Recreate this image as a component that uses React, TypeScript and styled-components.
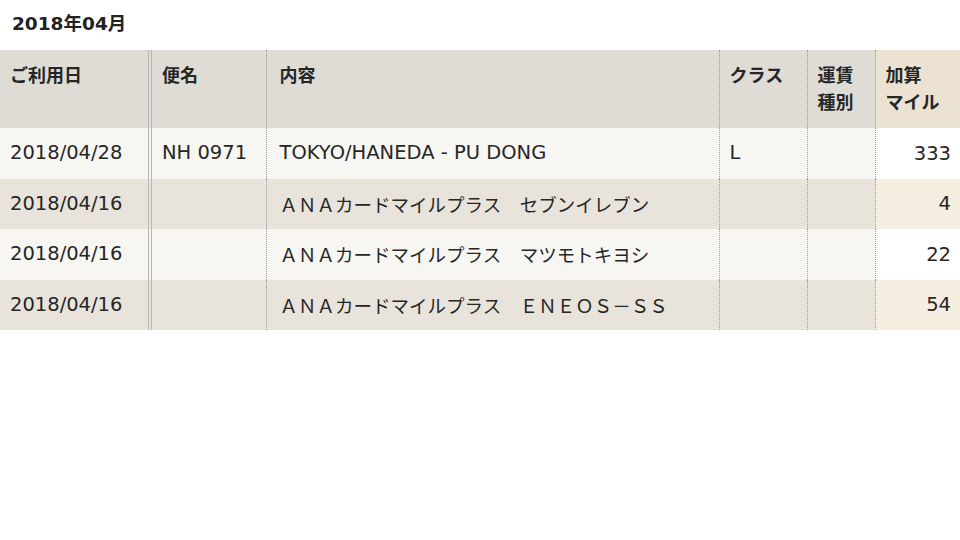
import styled, { createGlobalStyle } from "styled-components";

const GlobalStyle = createGlobalStyle`
  body {
    margin: 0;
    background: #fff;
    font-family: "DejaVu Sans", "Noto Sans CJK JP", sans-serif;
    color: #262626;
  }
`

type Row = {
  date: string
  flight: string
  content: string
  cls: string
  fare: string
  miles: string
}

const rows: Row[] = [
  { date: '2018/04/28', flight: 'NH 0971', content: 'TOKYO/HANEDA - PU DONG', cls: 'L', fare: '', miles: '333' },
  { date: '2018/04/16', flight: '', content: 'ＡＮＡカードマイルプラス　セブンイレブン', cls: '', fare: '', miles: '4' },
  { date: '2018/04/16', flight: '', content: 'ＡＮＡカードマイルプラス　マツモトキヨシ', cls: '', fare: '', miles: '22' },
  { date: '2018/04/16', flight: '', content: 'ＡＮＡカードマイルプラス　ＥＮＥＯＳ－ＳＳ', cls: '', fare: '', miles: '54' },
]

// full-width text reads a little smaller than the latin text in the shot
const isCjk = (s: string) => /[\u3000-\u30ff\uff00-\uffef]/.test(s)

function App() {
  return (
    <StyledPage>
      <GlobalStyle />
      <StyledMonth>2018<StyledCjk>年</StyledCjk>04<StyledCjk>月</StyledCjk></StyledMonth>
      <StyledTable>
        <colgroup>
          <col style={{ width: 150 }} />
          <col style={{ width: 116 }} />
          <col style={{ width: 453 }} />
          <col style={{ width: 88 }} />
          <col style={{ width: 68 }} />
          <col style={{ width: 85 }} />
        </colgroup>
        <thead>
          <tr>
            <StyledTh $border="double">ご利用日</StyledTh>
            <StyledTh $border="dotted">便名</StyledTh>
            <StyledTh $border="dotted" $wide>内容</StyledTh>
            <StyledTh $border="dotted">クラス</StyledTh>
            <StyledTh $border="dotted">運賃<br />種別</StyledTh>
            <StyledTh $accent>加算<br />マイル</StyledTh>
          </tr>
        </thead>
        <tbody>
          {rows.map((row, i) => (
            <StyledTr key={i} $even={i % 2 === 1}>
              <StyledTd $border="double">{row.date}</StyledTd>
              <StyledTd $border="dotted">{row.flight}</StyledTd>
              <StyledTd $border="dotted" $wide $cjk={isCjk(row.content)}>{row.content}</StyledTd>
              <StyledTd $border="dotted">{row.cls}</StyledTd>
              <StyledTd $border="dotted">{row.fare}</StyledTd>
              <StyledMiles $even={i % 2 === 1}>{row.miles}</StyledMiles>
            </StyledTr>
          ))}
        </tbody>
      </StyledTable>
    </StyledPage>
  )
}

const StyledPage = styled.div`
  width: 960px;
`

const StyledMonth = styled.h2`
  margin: 0;
  padding: 9px 12px 0;
  height: 50px;
  box-sizing: border-box;
  font-size: 18.5px;
  font-weight: 700;
  line-height: 26px;
  color: #222;
`

const StyledCjk = styled.span`
  font-family: "Noto Sans CJK JP", sans-serif;
`

const StyledTable = styled.table`
  width: 960px;
  border-collapse: collapse;
  table-layout: fixed;
  font-size: 19.5px;
`

const StyledTh = styled.th<{ $border?: 'double' | 'dotted', $accent?: boolean, $wide?: boolean }>`
  height: 78px;
  box-sizing: border-box;
  padding: 11px ${p => p.$wide ? '13px' : '10px'} 0;
  vertical-align: top;
  text-align: left;
  font-family: "Noto Sans CJK JP", sans-serif;
  font-size: 18px;
  font-weight: 700;
  line-height: 27px;
  background: ${p => p.$accent ? '#ebe2d1' : '#dfdcd6'};
  border-right: ${p => p.$border === 'double' ? '4px double #b9b7b2' : p.$border === 'dotted' ? '1px dotted #9a9893' : 'none'};
`

const StyledTr = styled.tr<{ $even: boolean }>`
  height: 50.5px;
  background: ${p => p.$even ? '#e8e4dc' : '#f7f6f3'};
`

const StyledTd = styled.td<{ $border?: 'double' | 'dotted', $wide?: boolean, $cjk?: boolean }>`
  padding: 0 ${p => p.$wide ? '13px' : '10px'};
  white-space: nowrap;
  line-height: 26px;
  font-family: ${p => p.$cjk ? '"Noto Sans CJK JP", sans-serif' : 'inherit'};
  font-size: ${p => p.$cjk ? '18.5px' : '19.5px'};
  border-right: ${p => p.$border === 'double' ? '4px double #b9b7b2' : p.$border === 'dotted' ? '1px dotted #9a9893' : 'none'};
`

const StyledMiles = styled.td<{ $even: boolean }>`
  padding: 0 9px 0 10px;
  text-align: right;
  background: ${p => p.$even ? '#f6eee0' : '#ffffff'};
`

export default App;
